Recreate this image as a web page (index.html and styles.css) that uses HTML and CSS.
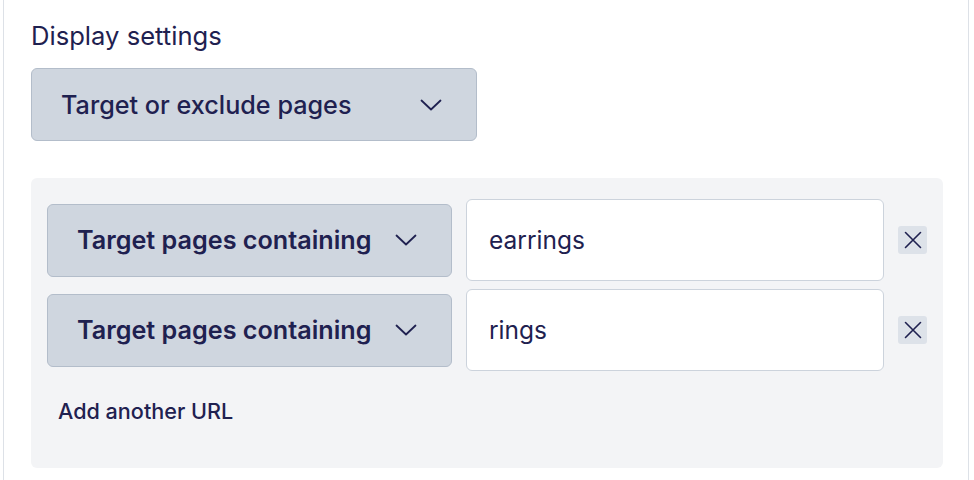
FILE: index.html
```html
<!DOCTYPE html>
<html>
<head>
<meta charset="utf-8">
<link rel="stylesheet" href="styles.css">
</head>
<body>
<div class="card">
  <h2 class="heading">Display settings</h2>
  <div class="select select-main">
    <span>Target or exclude pages</span>
    <svg class="chev" viewBox="0 0 22 12" width="22" height="12"><path d="M1.5 1.5 L11 10.5 L20.5 1.5" fill="none" stroke="#1f2150" stroke-width="1.8" stroke-linecap="round" stroke-linejoin="round"/></svg>
  </div>
  <div class="panel">
    <div class="row">
      <div class="select select-row">
        <span>Target pages containing</span>
        <svg class="chev" viewBox="0 0 22 12" width="22" height="12"><path d="M1.5 1.5 L11 10.5 L20.5 1.5" fill="none" stroke="#1f2150" stroke-width="1.8" stroke-linecap="round" stroke-linejoin="round"/></svg>
      </div>
      <div class="input">earrings</div>
      <button class="remove"><svg viewBox="0 0 18 18" width="18" height="18"><path d="M1.5 1.5 L16.5 16.5 M16.5 1.5 L1.5 16.5" fill="none" stroke="#1f2150" stroke-width="1.6" stroke-linecap="round"/></svg></button>
    </div>
    <div class="row">
      <div class="select select-row">
        <span>Target pages containing</span>
        <svg class="chev" viewBox="0 0 22 12" width="22" height="12"><path d="M1.5 1.5 L11 10.5 L20.5 1.5" fill="none" stroke="#1f2150" stroke-width="1.8" stroke-linecap="round" stroke-linejoin="round"/></svg>
      </div>
      <div class="input">rings</div>
      <button class="remove"><svg viewBox="0 0 18 18" width="18" height="18"><path d="M1.5 1.5 L16.5 16.5 M16.5 1.5 L1.5 16.5" fill="none" stroke="#1f2150" stroke-width="1.6" stroke-linecap="round"/></svg></button>
    </div>
    <div class="add">Add another URL</div>
  </div>
</div>
</body>
</html>
```
FILE: styles.css
```css
html, body {
  margin: 0;
  padding: 0;
  background: #ffffff;
}
body {
  font-family: Inter, "Noto Sans", sans-serif;
  color: #1f2150;
}
.card {
  margin-left: 3px;
  width: 966px;
  height: 480px;
  box-sizing: border-box;
  border-left: 1px solid #dde1e7;
  border-right: 1px solid #dde1e7;
  padding: 20px 0 0 27px;
}
.heading {
  margin: 0;
  font-size: 25.6px;
  font-weight: 400;
  line-height: 32px;
}
.select {
  box-sizing: border-box;
  display: flex;
  align-items: center;
  justify-content: space-between;
  background: #cfd6df;
  border: 1px solid #b3bdca;
  border-radius: 6px;
  height: 73px;
  padding: 0 34px 0 29px;
  font-size: 25.2px;
}
.select-main {
  margin-top: 16px;
  width: 446px;
  font-weight: 500;
}
.select-row {
  width: 405px;
  font-weight: 600;
  flex: none;
}
.chev {
  flex: none;
}
.panel {
  margin-top: 37px;
  width: 912px;
  height: 290px;
  box-sizing: border-box;
  background: #f3f4f6;
  border-radius: 6px;
  padding: 21px 16px 0 16px;
}
.row {
  display: flex;
  align-items: center;
  gap: 14px;
  margin-bottom: 8px;
}
.input {
  box-sizing: border-box;
  width: 418px;
  height: 82px;
  background: #ffffff;
  border: 1px solid #ccd3dc;
  border-radius: 6px;
  display: flex;
  align-items: center;
  padding-left: 22px;
  font-size: 24.5px;
  font-weight: 400;
}
.remove {
  width: 29px;
  height: 28px;
  border: none;
  border-radius: 3px;
  background: #dde2e9;
  padding: 0;
  display: flex;
  align-items: center;
  justify-content: center;
}
.add {
  margin-top: 26px;
  padding-left: 11px;
  font-size: 21.6px;
  font-weight: 500;
  line-height: 28px;
}
```
